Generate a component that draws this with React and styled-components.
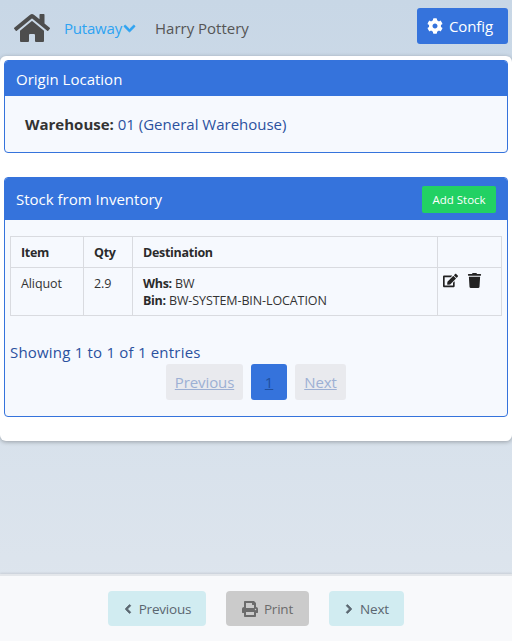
import React from 'react'
import styled, { createGlobalStyle } from 'styled-components'
import { FaHome, FaChevronDown, FaCog, FaEdit, FaTrash, FaPrint, FaChevronLeft, FaChevronRight } from 'react-icons/fa'

const Global = createGlobalStyle`
  html, body { margin: 0; padding: 0; }
  body { font-family: "Open Sans", "Noto Sans", sans-serif; font-size: 14px; color: #212529; }
  * { box-sizing: border-box; }
`
const Page = styled.div`
  width: 512px;
  height: 641px;
  display: flex;
  flex-direction: column;
  overflow: hidden;
  background: linear-gradient(180deg, #c8d7e6 0%, #dfe6ee 100%);
`
const Navbar = styled.div`
  height: 56px;
  display: flex;
  align-items: center;
  padding: 0 4px 0 14px;
`
const HomeIcon = styled(FaHome)`
  font-size: 36px;
  width: 36px;
  color: #4d4d4d;
`
const NavLink = styled.span`
  display: flex;
  align-items: center;
  gap: 1px;
  font-size: 15px;
  letter-spacing: ${props => props.$active ? '-0.2px' : '0'};
  color: ${props => props.$active ? '#2ea3f2' : '#555'};
  margin-left: ${props => props.$active ? '14px' : '19px'};
  svg { font-size: 13px; stroke: currentColor; stroke-width: 30px; }
`
const ConfigButton = styled.button`
  margin-left: auto;
  margin-top: -4px;
  width: 91px;
  height: 36px;
  border: 0;
  border-radius: 3px;
  padding: 0 0 0 10px;
  background: #3573dc;
  color: #fff;
  font-family: inherit;
  font-size: 15px;
  letter-spacing: -0.1px;
  display: flex;
  align-items: center;
  gap: 6px;
  svg { font-size: 16px; }
`
const Sheet = styled.div`
  background: #fff;
  border-radius: 6px;
  padding: 4px 4px 24px;
  box-shadow: 0 1px 4px rgba(0, 0, 0, 0.3);
  display: flex;
  flex-direction: column;
  gap: 24px;
`
const Panel = styled.div`
  border: 1px solid #3573dc;
  border-radius: 4px;
  background: #f6f9fe;
  overflow: hidden;
`
const PanelHead = styled.div`
  background: #3573dc;
  color: #fff;
  height: ${props => props.$tall ? '42px' : '35px'};
  display: flex;
  align-items: center;
  justify-content: space-between;
  padding: 0 11px;
  font-size: 15px;
`
const OriginBody = styled.div`
  padding: 18px 20px 17px;
  height: 56px;
  font-size: 15px;
  line-height: 20px;
  color: #2b519f;
  b { color: #333; font-weight: 700; }
`
const AddStock = styled.button`
  width: 74px;
  height: 27px;
  border: 0;
  border-radius: 2px;
  background: #22d163;
  color: #fff;
  font-family: inherit;
  font-size: 11.5px;
`
const StockBody = styled.div`
  padding: 16px 5px 0;
  height: 196px;
`
const Table = styled.table`
  width: 491px;
  table-layout: fixed;
  border-collapse: collapse;
  font-size: 12.5px;
  letter-spacing: -0.1px;
  color: #333;
  th, td { border: 1px solid #d9dbe0; padding: 0 10px; vertical-align: top; text-align: left; }
  th { height: 31px; vertical-align: middle; font-weight: 700; letter-spacing: -0.3px; color: #2b2b2b; }
  td { height: 48px; padding-top: 7px; line-height: 17px; }
  td b { letter-spacing: -0.3px; color: #2b2b2b; }
`
const ActionCell = styled.td`
  && { padding-top: 5px; padding-left: 5px; white-space: nowrap; }
  svg { font-size: 15px; color: #222; margin-right: 9px; }
`
const Info = styled.div`
  margin-top: 26px;
  font-size: 15px;
  letter-spacing: 0.2px;
  line-height: 20px;
  color: #2b519f;
`
const Pager = styled.div`
  display: flex;
  justify-content: center;
  gap: 8px;
  margin-top: 2px;
`
const PageLink = styled.span`
  height: 36px;
  width: ${props => props.$w}px;
  display: flex;
  align-items: center;
  justify-content: center;
  border-radius: 3px;
  font-size: 15px;
  letter-spacing: -0.1px;
  text-decoration: underline;
  background: ${props => props.$current ? '#3573dc' : '#e9eaee'};
  color: ${props => props.$current ? '#1f4f9e' : '#9db0d4'};
`
const Footer = styled.div`
  margin-top: auto;
  height: 67px;
  background: #f8f9fb;
  border-top: 2px solid #e4e7eb;
  box-shadow: 0 -1px 2px rgba(0, 0, 0, 0.1);
  display: flex;
  justify-content: center;
  gap: 20px;
  padding-top: 15px;
`
const FootButton = styled.span`
  height: 35px;
  width: ${props => props.$w}px;
  border-radius: 4px;
  display: flex;
  align-items: center;
  justify-content: center;
  gap: 6px;
  font-size: 13.5px;
  letter-spacing: -0.2px;
  color: ${props => props.$off ? '#6c6c6c' : '#5a6670'};
  background: ${props => props.$off ? '#cbcbcb' : '#d1ecf1'};
  svg {
    font-size: ${props => props.$off ? '16px' : '10px'};
    stroke: currentColor;
    stroke-width: ${props => props.$off ? '0' : '50px'};
  }
`

export default function App() {
  return (
    <Page>
      <Global />
      <Navbar>
        <HomeIcon />
        <NavLink $active>Putaway <FaChevronDown /></NavLink>
        <NavLink>Harry Pottery</NavLink>
        <ConfigButton><FaCog /> Config</ConfigButton>
      </Navbar>
      <Sheet>
        <Panel>
          <PanelHead>Origin Location</PanelHead>
          <OriginBody><b>Warehouse:</b> 01 (General Warehouse)</OriginBody>
        </Panel>
        <Panel>
          <PanelHead $tall>Stock from Inventory <AddStock>Add Stock</AddStock></PanelHead>
          <StockBody>
            <Table>
              <colgroup>
                <col width="73" /><col width="49" /><col width="305" /><col width="64" />
              </colgroup>
              <thead>
                <tr><th>Item</th><th>Qty</th><th>Destination</th><th></th></tr>
              </thead>
              <tbody>
                <tr>
                  <td>Aliquot</td>
                  <td>2.9</td>
                  <td><b>Whs:</b> BW<br /><b>Bin:</b> BW-SYSTEM-BIN-LOCATION</td>
                  <ActionCell><FaEdit /><FaTrash /></ActionCell>
                </tr>
              </tbody>
            </Table>
            <Info>Showing 1 to 1 of 1 entries</Info>
            <Pager>
              <PageLink $w={77}>Previous</PageLink>
              <PageLink $w={36} $current>1</PageLink>
              <PageLink $w={51}>Next</PageLink>
            </Pager>
          </StockBody>
        </Panel>
      </Sheet>
      <Footer>
        <FootButton $w={98}><FaChevronLeft /> Previous</FootButton>
        <FootButton $w={83} $off><FaPrint /> Print</FootButton>
        <FootButton $w={75}><FaChevronRight /> Next</FootButton>
      </Footer>
    </Page>
  )
}
